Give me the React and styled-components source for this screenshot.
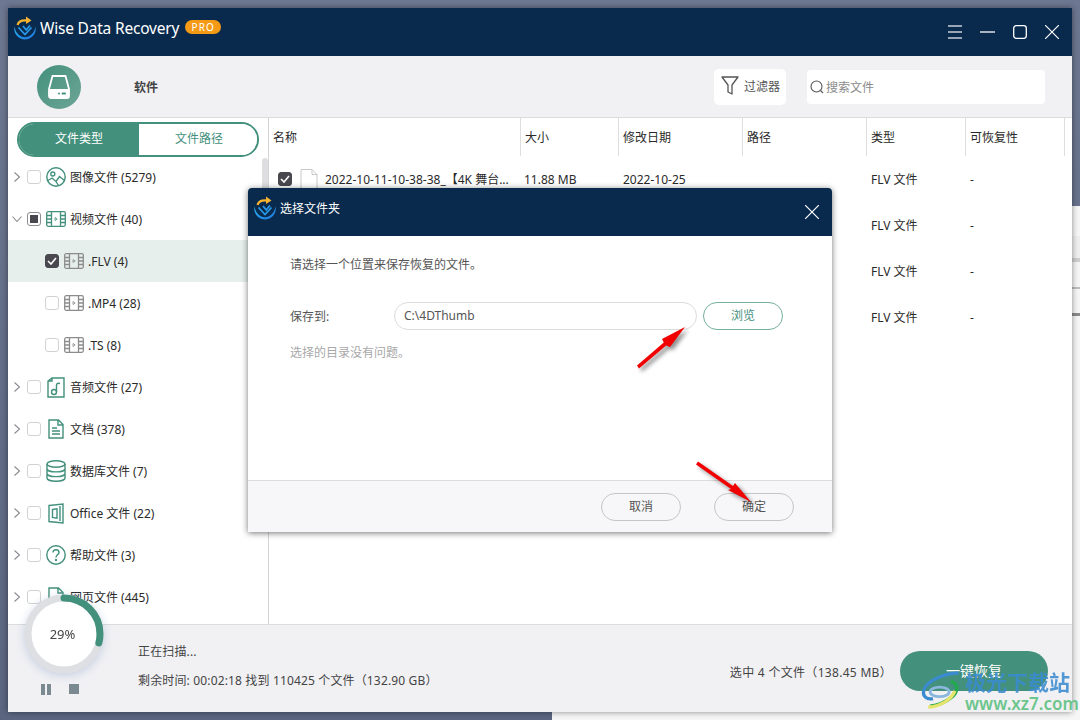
import React from 'react';
import styled, { createGlobalStyle } from 'styled-components';

const green = '#43907c';
const navy = '#092a4d';

const Global = createGlobalStyle`
  html, body {
    margin: 0;
    height: 720px;
    overflow: hidden;
    background: linear-gradient(180deg, #6d7791, #5b6580);
    font-family: "Noto Sans", "Noto Sans CJK SC", sans-serif;
    font-size: 12px;
    color: #333;
  }
  * { box-sizing: border-box; }
`;

const BackWindow = styled.div`
  position: absolute;
  left: 552px;
  top: 206px;
  right: 0;
  bottom: 0;
  background:
    linear-gradient(#8a8a8a, #8a8a8a) 0 107px / 100% 3px no-repeat,
    linear-gradient(#bdbdbd, #bdbdbd) 0 81px / 100% 2px no-repeat,
    linear-gradient(#cfcfcf, #cfcfcf) 0 52px / 100% 4px no-repeat,
    linear-gradient(#efefef, #efefef) 0 30px / 100% 22px no-repeat,
    #f6f6f6;
`;

const Window = styled.div`
  position: relative;
  width: 1064px;
  height: 704px;
  margin: 8px;
  display: flex;
  flex-direction: column;
  background: #fff;
  box-shadow: 0 0 6px rgba(0, 0, 0, 0.45);
`;

const TitleBar = styled.div`
  height: 48px;
  flex: none;
  display: flex;
  align-items: center;
  padding: 0 13px 8px 5px;
  background: ${navy};
  color: #fff;
`;

const AppName = styled.div`
  margin-left: 3px;
  font-size: 15.5px;
  letter-spacing: -0.2px;
`;

const ProBadge = styled.span`
  margin-left: 6px;
  margin-top: -2px;
  width: 36px;
  height: 14px;
  border-radius: 7px;
  background: #f59a14;
  font-size: 10px;
  line-height: 14px;
  letter-spacing: 1px;
  text-align: center;
`;

const WinControls = styled.div`
  margin-left: auto;
  margin-top: 8px;
  display: flex;
  align-items: center;
  gap: 18px;
`;

const Toolbar = styled.div`
  height: 62px;
  flex: none;
  display: flex;
  align-items: center;
  padding: 0 27px 0 29px;
  background: #f1f1f4;
  border-bottom: 1px solid #dcdcdc;
`;

const Disk = styled.div`
  width: 44px;
  height: 44px;
  border-radius: 50%;
  display: flex;
  align-items: center;
  justify-content: center;
  background: linear-gradient(135deg, #43907c, #6ea596);
`;

const ToolLabel = styled.div`
  margin-left: 53px;
  font-weight: 700;
  color: #444;
`;

const FilterButton = styled.div`
  margin-left: auto;
  width: 72px;
  height: 36px;
  display: flex;
  align-items: center;
  gap: 5px;
  padding: 0 0 2px 7px;
  border-radius: 5px;
  background: #fff;
  color: #555;
`;

const SearchBox = styled.div`
  margin-left: 21px;
  width: 238px;
  height: 34px;
  display: flex;
  align-items: center;
  gap: 2px;
  padding-left: 3px;
  border-radius: 4px;
  background: #fff;
  color: #8a8a8a;
`;

const Body = styled.div`
  flex: 1;
  min-height: 0;
  display: flex;
`;

const Sidebar = styled.div`
  position: relative;
  width: 261px;
  flex: none;
  overflow: hidden;
  border-right: 1px solid #d5d5d5;
`;

const Tabs = styled.div`
  display: flex;
  width: 242px;
  height: 35px;
  margin: 4px 0 0 9px;
  border: 2px solid ${green};
  border-radius: 18px;
  overflow: hidden;
`;

const Tab = styled.div`
  flex: ${p => (p.$active ? '0 0 120px' : '1')};
  display: flex;
  align-items: center;
  justify-content: center;
  padding: 0 0 3px ${p => (p.$active ? 0 : 2)}px;
  background: ${p => (p.$active ? green : '#fff')};
  color: ${p => (p.$active ? '#fff' : green)};
`;

const Thumb = styled.div`
  position: absolute;
  right: 0;
  top: 40px;
  width: 6px;
  height: 120px;
  border-radius: 3px;
  background: #dedee1;
`;

const Tree = styled.div`
  margin-top: -1px;
`;

const Row = styled.div`
  height: 42px;
  display: flex;
  align-items: center;
  padding-left: ${p => (p.$child ? '37px' : '5px')};
  background: ${p => (p.$selected ? '#e6efec' : 'transparent')};
  color: #2a2a2a;
`;

const Arrow = styled.span`
  width: 8px;
  margin-right: 6px;
  display: flex;
  justify-content: center;
`;

const Check = styled.span`
  width: 14px;
  height: 14px;
  flex: none;
  display: flex;
  align-items: center;
  justify-content: center;
  border-radius: 3px;
  border: 1px solid ${p => (p.$state === 'on' ? '#48484e' : p.$state === 'part' ? '#8d8d92' : '#d2d2d2')};
  background: ${p => (p.$state === 'on' ? '#48484e' : '#fff')};
`;

const PartMark = styled.span`
  width: 8px;
  height: 8px;
  background: #48484e;
`;

const IconSlot = styled.span`
  width: 20px;
  height: 22px;
  margin: 0 4px 0 5px;
  flex: none;
  display: flex;
  align-items: center;
  justify-content: center;
`;

const Main = styled.div`
  flex: 1;
  min-width: 0;
`;

const TableRow = styled.div`
  display: grid;
  grid-template-columns: 252px 98px 124px 124px 99px 99px;
  height: ${p => (p.$head ? '38px' : '46px')};
  align-items: center;
  color: #2a2a2a;
`;

const HeadCell = styled.div`
  height: 100%;
  display: flex;
  align-items: center;
  padding-left: 4px;
  border-right: 1px solid #dedede;
`;

const Cell = styled.div`
  display: flex;
  align-items: center;
  padding-left: ${p => p.$pad || 3}px;
  white-space: nowrap;
`;

const FileName = styled.span`
  margin-left: 7px;
`;

const Footer = styled.div`
  height: 88px;
  flex: none;
  display: flex;
  background: #f1f1f4;
  border-top: 1px solid #dcdcdc;
`;

const Controls = styled.div`
  width: 130px;
  flex: none;
  display: flex;
  gap: 18px;
  padding: 59px 0 0 33px;
`;

const PauseBar = styled.span`
  width: 4px;
  height: 11px;
  background: #7b8a90;
  box-shadow: 6px 0 0 #7b8a90;
  margin-right: 6px;
`;

const StopSquare = styled.span`
  width: 10px;
  height: 10px;
  background: #7b8a90;
`;

const Status = styled.div`
  display: flex;
  flex-direction: column;
  gap: 11px;
  padding-top: 17px;
  color: #444;
  letter-spacing: 0.15px;
`;

const Summary = styled.div`
  margin-left: auto;
  align-self: center;
  margin-top: 6px;
  color: #444;
  letter-spacing: 0.3px;
`;

const RecoverButton = styled.div`
  width: 148px;
  height: 40px;
  margin: 26px 24px 0 8px;
  border-radius: 20px;
  background: ${green};
  color: #fff;
  font-size: 14px;
  line-height: 40px;
  text-align: center;
`;

const RingWrap = styled.div`
  position: absolute;
  left: 16px;
  top: 586px;
  width: 80px;
  height: 80px;
  display: flex;
  align-items: center;
  justify-content: center;
  filter: drop-shadow(0 2px 5px rgba(110, 140, 190, 0.35));
`;

const RingSvg = styled.svg`
  position: absolute;
  inset: 0;
`;

const RingText = styled.span`
  position: relative;
  margin-left: -3px;
  font-size: 13px;
  color: #444;
`;

const Dialog = styled.div`
  position: absolute;
  left: 240px;
  top: 180px;
  width: 584px;
  height: 344px;
  display: flex;
  flex-direction: column;
  background: #fff;
  border-radius: 4px 4px 0 0;
  box-shadow: 0 1px 6px rgba(0, 0, 0, 0.55);
`;

const DialogTitle = styled.div`
  height: 48px;
  flex: none;
  display: flex;
  align-items: center;
  gap: 3px;
  padding: 0 13px 8px 5px;
  background: ${navy};
  border-radius: 4px 4px 0 0;
  color: #fff;
`;

const DialogClose = styled.span`
  margin-left: auto;
  margin-top: 8px;
  display: flex;
`;

const DialogBody = styled.div`
  flex: 1;
  padding: 19px 49px 0 42px;
  color: #555;
`;

const SaveRow = styled.div`
  display: flex;
  align-items: center;
  margin-top: 29px;
`;

const SaveLabel = styled.span`
  width: 104px;
`;

const PathInput = styled.div`
  width: 303px;
  height: 28px;
  padding-left: 9px;
  border: 1px solid #dcdcdc;
  border-radius: 14px;
  line-height: 26px;
`;

const Pill = styled.div`
  width: 80px;
  height: 28px;
  border-radius: 14px;
  border: 1px solid ${p => (p.$accent ? '#75ae9f' : '#c6c6c6')};
  color: ${p => (p.$accent ? green : '#555')};
  line-height: 25px;
  text-align: center;
`;

const BrowseSlot = styled.div`
  margin-left: 6px;
`;

const Hint = styled.div`
  margin-top: 13px;
  color: #a8a8a8;
`;

const DialogFoot = styled.div`
  height: 52px;
  flex: none;
  display: flex;
  align-items: center;
  justify-content: flex-end;
  gap: 33px;
  padding: 0 38px 0 0;
  background: #f7f7f9;
  border-top: 1px solid #dcdcdc;
`;

const Marks = styled.svg`
  position: absolute;
  left: 0;
  top: 0;
  pointer-events: none;
  filter: drop-shadow(3px 3px 2px rgba(0, 0, 0, 0.45));
`;

const Watermark = styled.div`
  position: absolute;
  left: 912px;
  bottom: -2px;
  height: 44px;
  display: flex;
  pointer-events: none;
`;

const Swirl = styled.svg`
  flex: none;
  margin-right: 0;
`;

const MarkWords = styled.div`
  display: flex;
  flex-direction: column;
  white-space: nowrap;
`;

const MarkTitle = styled.span`
  font-size: 21px;
  line-height: 24px;
  font-weight: 700;
  color: #3b8bd0;
  opacity: 0.88;
`;

const MarkSite = styled.span`
  font-size: 17px;
  line-height: 20px;
  font-weight: 600;
  color: #6cc58c;
`;

function Logo() {
  return (
    <svg width="24" height="24" viewBox="0 0 24 24" fill="none">
      <defs>
        <linearGradient id="logoBlue" x1="0" y1="0" x2="1" y2="1">
          <stop offset="0" stopColor="#2bb6f2" />
          <stop offset="1" stopColor="#1d74e0" />
        </linearGradient>
      </defs>
      <path d="M1.500 10.500C0 18 6 23.500 12 23.500s12-5.500 10.500-13C21.500 17 17 21.300 12 21.300S2.500 17 1.500 10.500z" fill="url(#logoBlue)" />
      <path d="M5.500 11.500l6.500 7 6.500-7M10 10l3.200 4 3.800-4.500" stroke="#2a9bec" strokeWidth="1.700" />
      <path d="M4.500 9C5.500 5.500 9 4 14 4.500" stroke="#f5b32f" strokeWidth="2.200" />
      <path d="M13 0.500l5.500 4-5.500 3.500z" fill="#f5b32f" />
    </svg>
  );
}

function Cross({ size = 14 }) {
  return (
    <svg width={size} height={size} viewBox="0 0 14 14" stroke="#fff" strokeWidth="1.200">
      <path d="M0 0l14 14M14 0L0 14" />
    </svg>
  );
}

function WindowButtons() {
  return (
    <WinControls>
      <svg width="14" height="14" viewBox="0 0 14 14" stroke="#c9d0d8" strokeWidth="1.300">
        <path d="M0 1h14M0 7h14M0 13h14" />
      </svg>
      <svg width="15" height="14" viewBox="0 0 15 14" stroke="#fff" strokeWidth="1.300">
        <path d="M0 7h15" />
      </svg>
      <svg width="14" height="14" viewBox="0 0 14 14" fill="none" stroke="#fff" strokeWidth="1.300">
        <rect x="0.700" y="0.700" width="12.600" height="12.600" rx="2.500" />
      </svg>
      <Cross />
    </WinControls>
  );
}

function FilmIcon({ color = green }) {
  return (
    <svg width="20" height="16" viewBox="0 0 20 16" fill="none" stroke={color} strokeWidth="1.300">
      <rect x="0.700" y="0.700" width="18.600" height="14.600" rx="1.500" />
      <path d="M5.500 1v14M14.500 1v14M1 4.500h4.500M1 8h4.500M1 11.500h4.500M14.500 4.500H19M14.500 8H19M14.500 11.500H19" />
      <path d="M9 6.500l2.200 1.500L9 9.500z" strokeWidth="0.800" />
    </svg>
  );
}

const stroke = { fill: 'none', stroke: green, strokeWidth: 1.4 };

const icons = {
  image: (
    <svg width="20" height="20" viewBox="0 0 20 20" {...stroke}>
      <circle cx="10" cy="10" r="9.200" />
      <circle cx="6.800" cy="7" r="2" />
      <path d="M2 13.500l4-2.500 4 3.500 3.500-5 5 4M10 14.500l2.500 4" />
    </svg>
  ),
  film: <FilmIcon />,
  audio: (
    <svg width="18" height="21" viewBox="0 0 18 21" {...stroke}>
      <path d="M1 4v16h16V1H5zM5 1v3H1" />
      <circle cx="7" cy="15" r="2.500" />
      <path d="M9.500 15V8c0-1.500 2-2 3.500-1.500" />
    </svg>
  ),
  doc: (
    <svg width="16" height="20" viewBox="0 0 16 20" {...stroke}>
      <path d="M1 1h9.500L15 5.500V19H1zM10 1v5h5" />
      <path d="M4 9h5M4 12h8M4 15h8" strokeWidth="1.600" />
    </svg>
  ),
  db: (
    <svg width="20" height="22" viewBox="0 0 20 22" {...stroke}>
      <ellipse cx="10" cy="4" rx="9" ry="3.200" />
      <path d="M1 4v14c0 1.800 4 3.200 9 3.200s9-1.400 9-3.200V4M1 8.700c0 1.800 4 3.200 9 3.200s9-1.400 9-3.200M1 13.400c0 1.800 4 3.200 9 3.200s9-1.400 9-3.200" />
    </svg>
  ),
  office: (
    <svg width="16" height="21" viewBox="0 0 16 21" {...stroke}>
      <path d="M1 2.500L15 1v19L1 18.500zM12 3v15" />
      <path d="M4.500 6.500L9 5.800v9.400l-4.500-.7z" />
    </svg>
  ),
  help: (
    <svg width="20" height="20" viewBox="0 0 20 20" {...stroke}>
      <circle cx="10" cy="10" r="9.200" />
      <path d="M7 7.500C7 5.500 8.500 4.700 10 4.700s3 1 3 2.700c0 2.300-3 2.500-3 5" />
      <circle cx="10" cy="15" r="0.500" />
    </svg>
  ),
  web: (
    <svg width="16" height="20" viewBox="0 0 16 20" {...stroke}>
      <path d="M1 1h9.500L15 5.500V19H1zM10 1v5h5" />
    </svg>
  ),
};

const tree = [
  { name: '图像文件 (5279)', icon: 'image' },
  { name: '视频文件 (40)', icon: 'film', open: true, check: 'part' },
  { name: '.FLV (4)', child: true, check: 'on', selected: true },
  { name: '.MP4 (28)', child: true },
  { name: '.TS (8)', child: true },
  { name: '音频文件 (27)', icon: 'audio' },
  { name: '文档 (378)', icon: 'doc' },
  { name: '数据库文件 (7)', icon: 'db' },
  { name: 'Office 文件 (22)', icon: 'office' },
  { name: '帮助文件 (3)', icon: 'help' },
  { name: '网页文件 (445)', icon: 'web' },
];

const columns = ['名称', '大小', '修改日期', '路径', '类型', '可恢复性'];

// 后面三行的名称被对话框挡住了，只留看得见的两列
const files = [
  { name: '2022-10-11-10-38-38_【4K 舞台...', size: '11.88 MB', date: '2022-10-25' },
  {},
  {},
  {},
];

function CheckMark() {
  return (
    <svg width="10" height="8" viewBox="0 0 10 8" fill="none" stroke="#fff" strokeWidth="1.600">
      <path d="M1 4l3 3 5-6" />
    </svg>
  );
}

function CheckBox({ state }) {
  return (
    <Check $state={state}>
      {state === 'on' && <CheckMark />}
      {state === 'part' && <PartMark />}
    </Check>
  );
}

function TreeRow({ item }) {
  return (
    <Row $child={item.child} $selected={item.selected}>
      {!item.child && (
        <Arrow>
          <svg width="10" height="10" viewBox="0 0 10 10" fill="none" stroke="#8a8a90" strokeWidth="1.100" style={{ flex: 'none' }}>
            <path d={item.open ? 'M0.500 2.500L5 7.500l4.500-5' : 'M2.500 0.500L7.500 5l-5 4.500'} />
          </svg>
        </Arrow>
      )}
      <CheckBox state={item.check} />
      <IconSlot>{item.child ? <FilmIcon color="#8c8c8c" /> : icons[item.icon]}</IconSlot>
      {item.name}
    </Row>
  );
}

function FileRow({ file }) {
  return (
    <TableRow>
      <Cell $pad={9}>
        {file.name && (
          <>
            <CheckBox state="on" />
            <svg width="18" height="21" viewBox="0 0 18 21" fill="#fff" stroke="#c8c8c8" style={{ marginLeft: 8 }}>
              <path d="M1 0.500h11l5 5v15H1zM12 0.500v5h5" />
            </svg>
            <FileName>{file.name}</FileName>
          </>
        )}
      </Cell>
      <Cell>{file.size}</Cell>
      <Cell $pad={4}>{file.date}</Cell>
      <Cell />
      <Cell $pad={4}>FLV 文件</Cell>
      <Cell $pad={4}>-</Cell>
    </TableRow>
  );
}

export default function App() {
  return (
    <>
      <Global />
      <BackWindow />
      <Window>
        <TitleBar>
          <Logo />
          <AppName>Wise Data Recovery</AppName>
          <ProBadge>PRO</ProBadge>
          <WindowButtons />
        </TitleBar>

        <Toolbar>
          <Disk>
            <svg width="22" height="24" viewBox="0 0 22 24">
              <path d="M4.500 1h13l3.500 13v7a2 2 0 0 1-2 2H3a2 2 0 0 1-2-2v-7z" fill="none" stroke="#fff" strokeWidth="1.800" />
              <path d="M1 14h20v7a2 2 0 0 1-2 2H3a2 2 0 0 1-2-2z" fill="#fff" />
              <circle cx="11" cy="18.500" r="1" fill="#43907c" />
              <rect x="13.500" y="17.500" width="4.500" height="2" rx="1" fill="#43907c" />
            </svg>
          </Disk>
          <ToolLabel>软件</ToolLabel>
          <FilterButton>
            <svg width="18" height="19" viewBox="0 0 18 19" fill="none" stroke="#555" strokeWidth="1.300" strokeLinejoin="round">
              <path d="M1 1h16l-6 8v9l-4-2V9z" />
            </svg>
            过滤器
          </FilterButton>
          <SearchBox>
            <svg width="14" height="14" viewBox="0 0 14 14" fill="none" stroke="#555" strokeWidth="1.100">
              <circle cx="6.500" cy="6.500" r="5.500" />
              <path d="M10.500 10.500L13 13" />
            </svg>
            搜索文件
          </SearchBox>
        </Toolbar>

        <Body>
          <Sidebar>
            <Tabs>
              <Tab $active>文件类型</Tab>
              <Tab>文件路径</Tab>
            </Tabs>
            <Thumb />
            <Tree>
              {tree.map(item => <TreeRow key={item.name} item={item} />)}
            </Tree>
          </Sidebar>
          <Main>
            <TableRow $head>
              {columns.map(c => <HeadCell key={c}>{c}</HeadCell>)}
            </TableRow>
            {files.map((f, i) => <FileRow key={i} file={f} />)}
          </Main>
        </Body>

        <Footer>
          <Controls>
            <PauseBar />
            <StopSquare />
          </Controls>
          <Status>
            <span>正在扫描...</span>
            <span>剩余时间: 00:02:18 找到 110425 个文件（132.90 GB）</span>
          </Status>
          <Summary>选中 4 个文件（138.45 MB）</Summary>
          <RecoverButton>一键恢复</RecoverButton>
        </Footer>

        <RingWrap>
          <RingSvg width="80" height="80" viewBox="0 0 80 80" fill="none">
            <circle cx="40" cy="40" r="36" fill="#fff" stroke="#dddfe3" strokeWidth="7" />
            <circle
              cx="40" cy="40" r="36" stroke={green} strokeWidth="7" strokeLinecap="round"
              pathLength="100" strokeDasharray="29 100" transform="rotate(-90 40 40)"
            />
          </RingSvg>
          <RingText>29%</RingText>
        </RingWrap>

        <Dialog>
          <DialogTitle>
            <Logo />
            选择文件夹
            <DialogClose><Cross /></DialogClose>
          </DialogTitle>
          <DialogBody>
            请选择一个位置来保存恢复的文件。
            <SaveRow>
              <SaveLabel>保存到:</SaveLabel>
              <PathInput>C:\4DThumb</PathInput>
              <BrowseSlot><Pill $accent>浏览</Pill></BrowseSlot>
            </SaveRow>
            <Hint>选择的目录没有问题。</Hint>
          </DialogBody>
          <DialogFoot>
            <Pill>取消</Pill>
            <Pill>确定</Pill>
          </DialogFoot>
        </Dialog>

        <Marks width="1064" height="704" viewBox="8 8 1064 704" fill="#f00000">
          <path d="M637 365.600L663.800 342.600 662 339 685 327 670 347 666.200 345.400 639 368.400z" />
          <path d="M698 461.600L733 486 735 483 751 502 728 490 731 489 696 464.400z" />
        </Marks>

        <Watermark>
          <Swirl width="45" height="40" viewBox="0 0 46 42" fill="none">
            <path d="M40 3C20 4 3 14 3 24c0 5 5 7 10 6" stroke="#3b8bd0" strokeWidth="3.500" />
            <ellipse cx="20" cy="23" rx="10" ry="5" stroke="#8bb7dc" strokeWidth="3" />
            <path d="M32 12c8 3 8 11 0 17-5 4-14 8-22 9" stroke="#22a94f" strokeWidth="3.500" />
            <path d="M36 22c-3 8-14 16-28 17" stroke="#e6e46a" strokeWidth="3.500" />
          </Swirl>
          <MarkWords>
            <MarkTitle>极光下载站</MarkTitle>
            <MarkSite>www.xz7.com</MarkSite>
          </MarkWords>
        </Watermark>
      </Window>
    </>
  );
}
